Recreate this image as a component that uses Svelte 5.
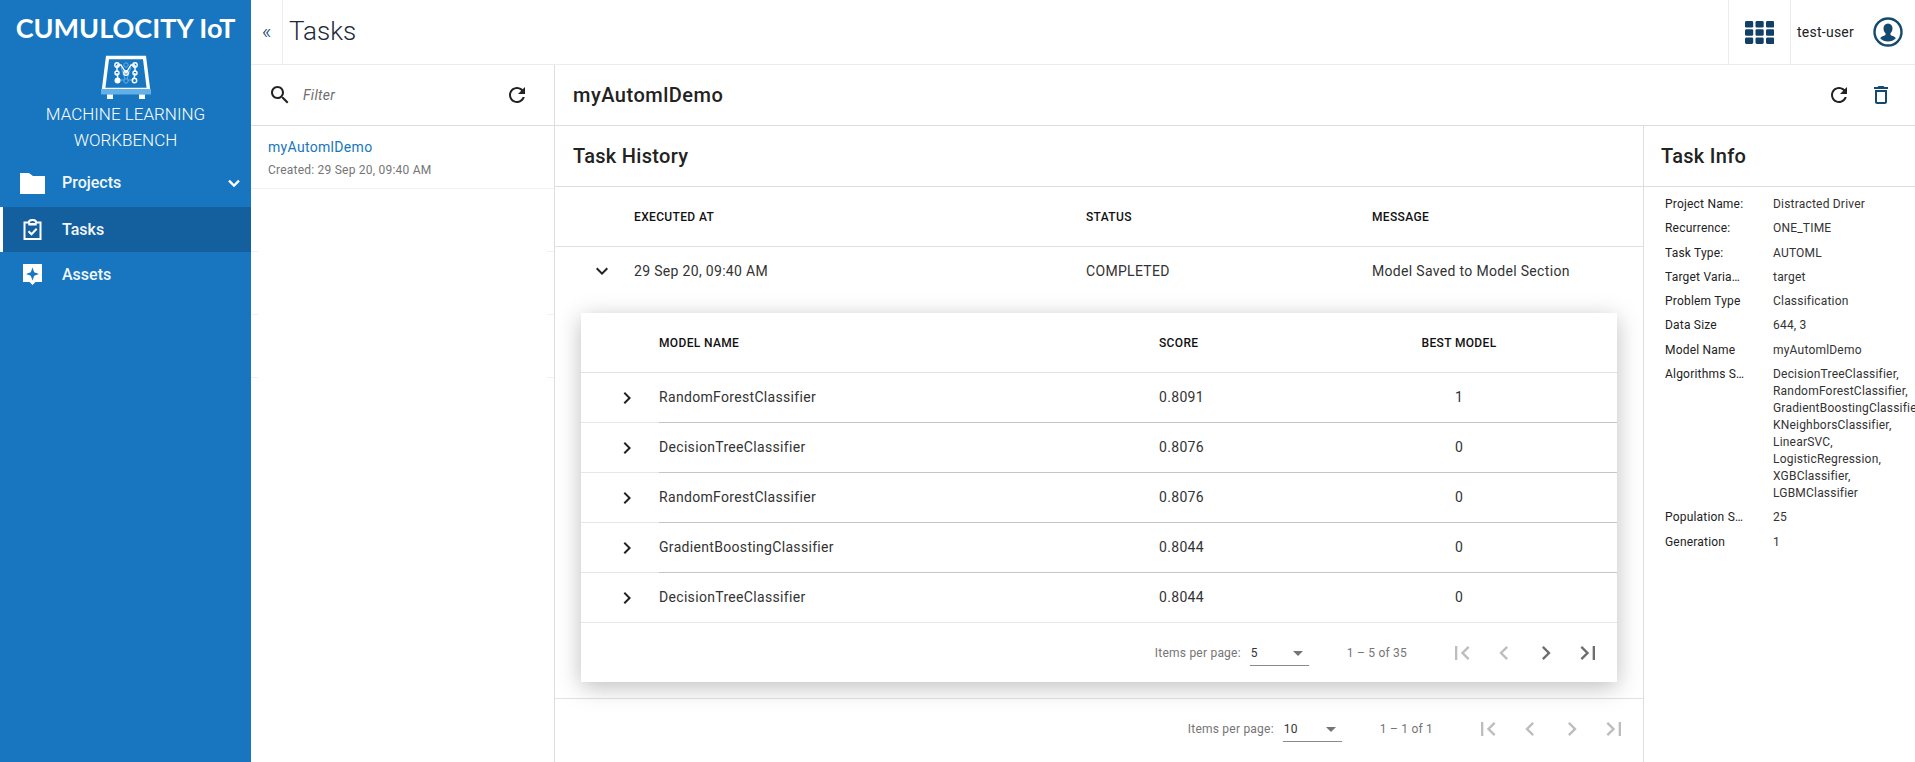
<script lang="ts">
	const models = [
		{ name: 'RandomForestClassifier', score: '0.8091', best: 1 },
		{ name: 'DecisionTreeClassifier', score: '0.8076', best: 0 },
		{ name: 'RandomForestClassifier', score: '0.8076', best: 0 },
		{ name: 'GradientBoostingClassifier', score: '0.8044', best: 0 },
		{ name: 'DecisionTreeClassifier', score: '0.8044', best: 0 }
	];

	const info = [
		{ label: 'Project Name:', value: 'Distracted Driver' },
		{ label: 'Recurrence:', value: 'ONE_TIME' },
		{ label: 'Task Type:', value: 'AUTOML' },
		{ label: 'Target Variable:', value: 'target' },
		{ label: 'Problem Type', value: 'Classification' },
		{ label: 'Data Size', value: '644, 3' },
		{ label: 'Model Name', value: 'myAutomlDemo' },
		{
			label: 'Algorithms Selected',
			value:
				'DecisionTreeClassifier, RandomForestClassifier, GradientBoostingClassifier, KNeighborsClassifier, LinearSVC, LogisticRegression, XGBClassifier, LGBMClassifier'
		},
		{ label: 'Population Size', value: '25' },
		{ label: 'Generation', value: '1' }
	];

	const REFRESH =
		'M17.65 6.35C16.2 4.9 14.21 4 12 4c-4.42 0-7.99 3.58-7.99 8s3.57 8 7.99 8c3.73 0 6.84-2.55 7.73-6h-2.08c-.82 2.33-3.04 4-5.65 4-3.31 0-6-2.69-6-6s2.69-6 6-6c1.66 0 3.14.69 4.22 1.78L13 11h7V4l-2.35 2.35z';
	const CHEVRON_RIGHT = 'M10 6L8.59 7.41 13.17 12l-4.58 4.59L10 18l6-6z';
	const CHEVRON_DOWN = 'M7.41 8.59L12 13.17l4.59-4.58L18 10l-6 6-6-6z';
	const PAGE_ICONS = [
		'M18.41 16.59L13.82 12l4.59-4.59L17 6l-6 6 6 6zM6 6h2v12H6V6z',
		'M15.41 7.41L14 6l-6 6 6 6 1.41-1.41L10.83 12z',
		'M10 6L8.59 7.41 13.17 12l-4.58 4.59L10 18l6-6z',
		'M5.59 7.41L10.18 12l-4.59 4.59L7 18l6-6-6-6zM16 6h2v12h-2V6z'
	];
</script>

{#snippet paginator(size: string, range: string, enabled: number[])}
	<div class="paginator">
		<span class="pg-label">Items per page:</span>
		<div class="pg-select">
			<span>{size}</span>
			<i class="pg-arrow"></i>
		</div>
		<span class="pg-range">{range}</span>
		<div class="pg-buttons">
			{#each PAGE_ICONS as d, i}
				<button class="pg-btn" class:on={enabled.includes(i)} aria-label="page">
					<svg viewBox="0 0 24 24" width="28" height="28"><path {d} /></svg>
				</button>
			{/each}
		</div>
	</div>
{/snippet}

<div class="page">
	<aside class="sidebar">
		<div class="brand">CUMULOCITY IoT</div>
		<svg class="logo" viewBox="0 0 50 44" width="50" height="44">
			<path d="M6.5 2.5h37l4 32h-45z" fill="none" stroke="#fff" stroke-width="3.4" />
			<rect x="0" y="34" width="50" height="5.5" fill="#62b0ea" />
			<rect x="6" y="39.5" width="6" height="4.5" fill="#fff" />
			<rect x="38" y="39.5" width="6" height="4.5" fill="#fff" />
			<g stroke="#62b0ea" stroke-width="1" fill="none">
				<circle cx="25" cy="10" r="2.2" />
				<circle cx="25" cy="26" r="2.2" />
				<path d="M17 25h6M27 25h6M20 12l4 12M30 12l-4 12" />
			</g>
			<g stroke="#fff" stroke-width="1.4" fill="none">
				<path d="M16 10h4l5 8 5-8h4M16 10v7M34 10v7M16 18l1 6M34 18l-1 6" />
				<circle cx="16" cy="10" r="2.2" />
				<circle cx="34" cy="10" r="2.2" />
				<circle cx="25" cy="18" r="2.2" />
				<circle cx="16" cy="18" r="2" />
				<circle cx="34" cy="18" r="2" />
				<circle cx="33.5" cy="25.5" r="2.2" />
			</g>
			<circle cx="16.5" cy="25.5" r="3" fill="#fff" />
		</svg>
		<div class="app-name">MACHINE LEARNING<br />WORKBENCH</div>
		<nav class="nav">
			<div class="nav-item">
				<svg class="nav-icon" viewBox="0 0 25 21" width="25" height="21">
					<path d="M0 0h9l4 3h12v18H0z" fill="#fff" />
				</svg>
				<span>Projects</span>
				<svg class="nav-caret" viewBox="0 0 24 24" width="20" height="20">
					<path d="M7 8.2l5 5 5-5 2 2-7 7-7-7z" fill="#fff" />
				</svg>
			</div>
			<div class="nav-item active">
				<svg class="nav-icon" viewBox="0 0 25 21" width="25" height="21">
					<path
						d="M4.5 3.5h4.3a3.7 2.6 0 0 1 7.4 0h4.3v16.500h-16z"
						fill="none"
						stroke="#fff"
						stroke-width="2"
					/>
					<path d="M8.300 4h8.400v2.500h-8.400z" fill="#fff" />
					<path d="M8.500 12.200l3 3 5.200-5.400" fill="none" stroke="#fff" stroke-width="2" />
				</svg>
				<span>Tasks</span>
			</div>
			<div class="nav-item">
				<svg class="nav-icon" viewBox="0 0 25 21" width="25" height="21">
					<path d="M3 0h19v18h-6.500l-3 3-3-3H3z" fill="#fff" />
					<path d="M12.500 3.500l1.700 4.800 4.800 1.700-4.800 1.700-1.700 4.800-1.700-4.800-4.800-1.700 4.800-1.700z" fill="#1776bf" />
				</svg>
				<span>Assets</span>
			</div>
		</nav>
	</aside>

	<div class="main">
		<header class="topbar">
			<button class="collapse" aria-label="collapse">«</button>
			<h1>Tasks</h1>
			<div class="top-apps">
				<svg viewBox="0 0 29 23" width="29" height="23">
					{#each [0, 1, 2] as r}
						{#each [0, 1, 2] as c}
							<rect x={c * 10.500} y={r * 8.200} width="8.200" height="6.600" rx="1.400" fill="#123f66" />
						{/each}
					{/each}
				</svg>
			</div>
			<div class="top-user">
				<span>test-user</span>
				<svg viewBox="0 0 30 30" width="30" height="30">
					<circle cx="15" cy="15" r="13.500" fill="none" stroke="#154a70" stroke-width="2.400" />
					<path
						d="M15 6.500c2.900 0 4.500 2.200 4.500 5 0 2-.8 3.700-2 4.800v1.700c1.800 1 4.300 1.500 5.300 3.200a11 11 0 0 1-15.600 0c1-1.700 3.500-2.200 5.300-3.200v-1.700c-1.200-1.100-2-2.800-2-4.800 0-2.800 1.600-5 4.500-5z"
						fill="#154a70"
					/>
				</svg>
			</div>
		</header>

		<div class="content">
			<section class="list">
				<div class="filter">
					<svg viewBox="0 0 24 24" width="24" height="24">
						<path
							d="M15.500 14h-.79l-.28-.27C15.410 12.590 16 11.110 16 9.500 16 5.910 13.090 3 9.500 3S3 5.910 3 9.500 5.910 16 9.500 16c1.610 0 3.090-.59 4.230-1.570l.27.28v.79l5 4.990L20.490 19l-4.990-5zm-6 0C7.010 14 5 11.990 5 9.500S7.010 5 9.500 5 14 7.010 14 9.500 11.990 14 9.500 14z"
						/>
					</svg>
					<span class="filter-text">Filter</span>
					<svg class="filter-refresh" viewBox="0 0 24 24" width="24" height="24"><path d={REFRESH} /></svg>
				</div>
				<div class="task-item">
					<div class="task-name">myAutomlDemo</div>
					<div class="task-date">Created: 29 Sep 20, 09:40 AM</div>
				</div>
				<div class="ghost-row"></div>
				<div class="ghost-row"></div>
				<div class="ghost-row"></div>
			</section>

			<section class="detail">
				<div class="detail-head">
					<h2>myAutomlDemo</h2>
					<svg viewBox="0 0 24 24" width="24" height="24"><path d={REFRESH} /></svg>
					<svg class="trash" viewBox="0 0 24 24" width="24" height="24">
						<path
							d="M6 19c0 1.100.9 2 2 2h8c1.100 0 2-.9 2-2V7H6v12zM8 9h8v10H8V9zm7.500-5l-1-1h-5l-1 1H5v2h14V4z"
						/>
					</svg>
				</div>

				<div class="detail-body">
					<div class="history">
						<h3 class="panel-title">Task History</h3>
						<div class="outer-row outer-head">
							<span></span>
							<span>EXECUTED AT</span>
							<span>STATUS</span>
							<span>MESSAGE</span>
						</div>
						<div class="outer-row outer-cell">
							<svg viewBox="0 0 24 24" width="24" height="24"><path d={CHEVRON_DOWN} /></svg>
							<span>29 Sep 20, 09:40 AM</span>
							<span>COMPLETED</span>
							<span>Model Saved to Model Section</span>
						</div>

						<div class="card-wrap">
							<div class="card">
								<div class="inner-row inner-head">
									<span></span>
									<span>MODEL NAME</span>
									<span>SCORE</span>
									<span class="center">BEST MODEL</span>
								</div>
								{#each models as m, i}
									<div class="inner-row inner-cell" class:last={i === models.length - 1}>
										<svg viewBox="0 0 24 24" width="24" height="24"><path d={CHEVRON_RIGHT} /></svg>
										<span>{m.name}</span>
										<span>{m.score}</span>
										<span class="center">{m.best}</span>
										<span></span>
									</div>
								{/each}
								{@render paginator('5', '1 – 5 of 35', [2, 3])}
							</div>
						</div>

						<div class="outer-footer">
							{@render paginator('10', '1 – 1 of 1', [])}
						</div>
					</div>

					<aside class="info">
						<h3 class="panel-title">Task Info</h3>
						<dl class="info-list">
							{#each info as row}
								<div class="info-row">
									<dt>{row.label}</dt>
									<dd>{row.value}</dd>
								</div>
							{/each}
						</dl>
					</aside>
				</div>
			</section>
		</div>
	</div>
</div>

<style>
	:global(body) {
		margin: 0;
		background: #fff;
		overflow: hidden;
	}

	.page {
		display: flex;
		width: 1915px;
		height: 762px;
		overflow: hidden;
		font-family: Roboto, 'Liberation Sans', sans-serif;
		font-size: 14px;
		letter-spacing: 0.32px;
		color: #333;
	}

	/* sidebar */
	.sidebar {
		flex: 0 0 251px;
		display: flex;
		flex-direction: column;
		align-items: center;
		background: #1776bf;
		color: #fff;
		letter-spacing: 0;
	}

	.brand {
		font-family: Lato, sans-serif;
		font-weight: 700;
		font-size: 27px;
		line-height: 30px;
		margin-top: 13px;
		white-space: nowrap;
	}

	.logo {
		display: block;
		margin-top: 12px;
	}

	.app-name {
		font-weight: 300;
		font-size: 17px;
		line-height: 26px;
		text-align: center;
		margin-top: 2px;
	}

	.nav {
		width: 100%;
		margin-top: 6px;
	}

	.nav-item {
		position: relative;
		display: flex;
		align-items: center;
		height: 45px;
		padding-left: 20px;
		font-size: 16px;
		font-weight: 500;
		color: #f2f7fb;
	}

	.nav-item:first-child {
		height: 48px;
	}

	.nav-item span {
		margin-top: -1px;
	}

	.nav-item.active {
		background: #14609f;
		border-left: 3px solid #fff;
		padding-left: 17px;
	}

	.nav-icon {
		flex: none;
		margin-right: 17px;
	}

	.nav-caret {
		position: absolute;
		left: 224px;
		top: 14px;
	}

	/* top bar */
	.main {
		flex: 1;
		min-width: 0;
		display: flex;
		flex-direction: column;
	}

	.topbar {
		flex: 0 0 65px;
		box-sizing: border-box;
		display: flex;
		align-items: stretch;
		border-bottom: 1px solid #ececec;
		letter-spacing: 0;
	}

	.collapse {
		width: 32px;
		border: 0;
		border-right: 1px solid #ececec;
		background: none;
		padding: 0 0 3px;
		font-family: inherit;
		font-size: 21px;
		font-weight: 300;
		color: #123f66;
	}

	.topbar h1 {
		flex: 1;
		margin: 0;
		padding-left: 6px;
		font-size: 26px;
		font-weight: 300;
		line-height: 62px;
		color: #1c2b3a;
	}

	.top-apps {
		width: 61px;
		display: flex;
		align-items: center;
		justify-content: center;
		border-left: 1px solid #ececec;
		border-right: 1px solid #ececec;
	}

	.top-user {
		width: 124px;
		box-sizing: border-box;
		display: flex;
		align-items: center;
		padding-left: 6px;
		font-size: 14px;
		letter-spacing: 0.25px;
		color: #222;
	}

	.top-user span {
		flex: 1;
	}

	.top-user svg {
		margin-right: 12px;
	}

	/* task list */
	.content {
		flex: 1;
		min-height: 0;
		display: flex;
	}

	.list {
		flex: 0 0 304px;
		box-sizing: border-box;
		border-right: 1px solid #dedede;
	}

	.filter {
		height: 61px;
		box-sizing: border-box;
		display: flex;
		align-items: center;
		padding-left: 17px;
		border-bottom: 1px solid #dedede;
	}

	.filter svg {
		fill: #222;
	}

	.filter-text {
		flex: 1;
		margin-left: 11px;
		font-size: 14px;
		font-style: italic;
		color: #6f6f6f;
	}

	.filter-refresh {
		margin-right: 25px;
	}

	.task-item {
		height: 63px;
		box-sizing: border-box;
		padding: 11px 17px 0;
		border-bottom: 1px solid #f1f1f1;
	}

	.task-name {
		font-size: 14px;
		line-height: 20px;
		color: #1776bf;
	}

	.task-date {
		margin-top: 5px;
		font-size: 12px;
		letter-spacing: 0.22px;
		line-height: 16px;
		color: #757575;
	}

	.ghost-row {
		position: relative;
		height: 63px;
	}

	.ghost-row::before,
	.ghost-row::after {
		content: '';
		position: absolute;
		bottom: 0;
		width: 7px;
		height: 1px;
		background: #f1f1f1;
	}

	.ghost-row::before {
		left: 0;
	}

	.ghost-row::after {
		right: 0;
	}

	/* detail */
	.detail {
		flex: 1;
		min-width: 0;
		display: flex;
		flex-direction: column;
	}

	.detail-head {
		flex: 0 0 61px;
		box-sizing: border-box;
		display: flex;
		align-items: center;
		padding: 0 22px 0 18px;
		border-bottom: 1px solid #dedede;
	}

	.detail-head h2 {
		flex: 1;
		margin: 0;
		font-size: 20px;
		font-weight: 500;
		letter-spacing: 0.5px;
		color: #222;
	}

	.detail-head svg {
		fill: #222;
	}

	.detail-head .trash {
		margin-left: 18px;
		fill: #154a70;
	}

	.detail-body {
		flex: 1;
		min-height: 0;
		display: flex;
	}

	.history {
		flex: 0 0 1089px;
		box-sizing: border-box;
		border-right: 1px solid #dedede;
		display: flex;
		flex-direction: column;
	}

	.panel-title {
		margin: 0;
		height: 61px;
		box-sizing: border-box;
		padding-left: 18px;
		font-size: 20px;
		font-weight: 500;
		letter-spacing: 0.3px;
		line-height: 61px;
		color: #222;
		border-bottom: 1px solid #dedede;
	}

	.outer-row {
		display: grid;
		grid-template-columns: 79px 452px 286px 1fr;
		align-items: center;
	}

	.outer-head {
		height: 60px;
		box-sizing: border-box;
		border-bottom: 1px solid #e2e2e2;
		font-size: 12px;
		font-weight: 500;
		letter-spacing: 0.35px;
		color: #111;
	}

	.outer-cell {
		height: 50px;
		box-sizing: border-box;
		padding-bottom: 2px;
	}

	.outer-cell svg,
	.inner-cell svg {
		fill: #222;
		justify-self: center;
	}

	.outer-cell svg {
		margin-left: 14px;
	}

	.inner-cell svg {
		margin-left: 13px;
	}

	.card-wrap {
		padding: 16px 26px 16px 26px;
		border-bottom: 1px solid #e2e2e2;
	}

	.card {
		background: #fff;
		box-shadow: 0 5px 22px rgba(0, 0, 0, 0.26);
	}

	.inner-row {
		display: grid;
		grid-template-columns: 78px 500px 200px 200px 1fr;
		align-items: center;
	}

	.inner-head {
		height: 60px;
		box-sizing: border-box;
		border-bottom: 1px solid #e2e2e2;
		font-size: 12px;
		font-weight: 500;
		letter-spacing: 0.35px;
		color: #111;
	}

	.inner-cell {
		height: 50px;
		box-sizing: border-box;
		border-bottom: 1px solid #e6e6e6;
	}

	.inner-cell span {
		align-self: stretch;
		display: flex;
		align-items: center;
		padding-bottom: 2px;
		margin-bottom: -1px;
		border-bottom: 1px solid #c6c6c6;
	}

	.inner-cell.last span {
		border-bottom-color: #e6e6e6;
	}

	.center {
		text-align: center;
		justify-content: center;
	}

	/* paginator */
	.paginator {
		height: 59px;
		display: flex;
		align-items: center;
		justify-content: flex-end;
		padding-right: 8px;
		font-size: 12px;
		letter-spacing: 0.22px;
		color: #757575;
	}

	.pg-select {
		width: 59px;
		height: 26px;
		box-sizing: border-box;
		margin: 0 0 0 9px;
		display: flex;
		align-items: center;
		justify-content: space-between;
		padding: 2px 6px 0 1px;
		border-bottom: 1px solid #8a8a8a;
		color: #333;
	}

	.pg-arrow {
		width: 0;
		height: 0;
		border-left: 5px solid transparent;
		border-right: 5px solid transparent;
		border-top: 5px solid #757575;
	}

	.pg-range {
		margin-left: 38px;
	}

	.pg-buttons {
		display: flex;
		margin-left: 34px;
	}

	.pg-btn {
		width: 42px;
		height: 40px;
		padding: 0;
		border: 0;
		background: none;
		display: flex;
		align-items: center;
		justify-content: center;
		fill: #bdbdbd;
	}

	.pg-btn.on {
		fill: #6e6e6e;
	}

	/* info */
	.info {
		flex: 1;
		min-width: 0;
		overflow: hidden;
	}

	.info .panel-title {
		padding-left: 17px;
	}

	.info-list {
		margin: 0;
		padding: 9px 0 0 21px;
		font-size: 12px;
		letter-spacing: 0.2px;
		line-height: 17px;
	}

	.info-row {
		display: flex;
		margin-bottom: 7.3px;
	}

	.info-row dt {
		flex: 0 0 81px;
		margin-right: 27px;
		overflow: hidden;
		white-space: nowrap;
		text-overflow: ellipsis;
		color: #222;
		font-weight: 400;
	}

	.info-row dd {
		flex: 0 0 142px;
		margin: 0;
		color: #333;
	}
</style>
